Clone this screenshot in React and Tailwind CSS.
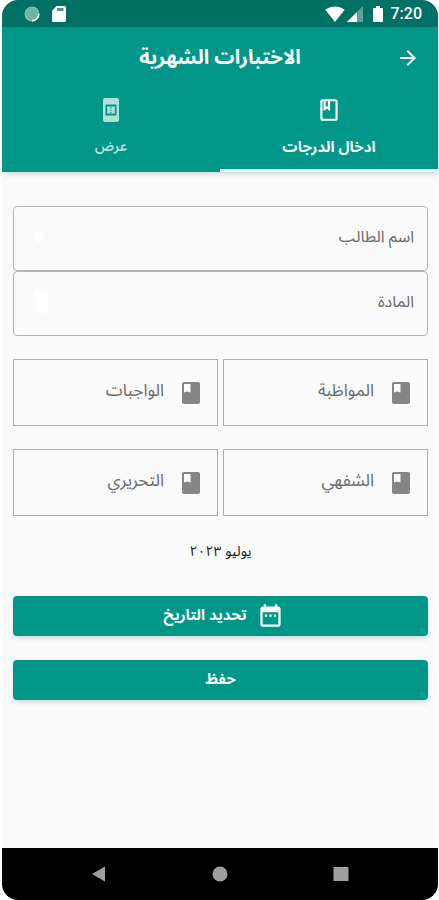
import React from "react";
import {
  MdArrowForward,
  MdDateRange,
  MdOutlineBook,
  MdSignalWifi4Bar,
} from "react-icons/md";

function StatusBar() {
  return (
    <div dir="ltr" className="flex h-[27px] items-center bg-[#007064] pl-5 pr-4 text-white">
      <svg className="ml-0.5 size-4" viewBox="0 0 16 16" aria-hidden="true">
        <circle cx="8" cy="8" r="7.5" fill="#8fc0b9" />
        <circle cx="8" cy="8" r="6.5" fill="#73b1a9" />
        <path d="M14.8 8A6.8 6.8 0 0 1 8 14.8" fill="none" stroke="#fff" strokeWidth="1.5" />
      </svg>
      <svg className="ml-3 h-4 w-3.5" viewBox="0 0 14 16" aria-hidden="true">
        <path d="M4.5 0H12.5Q14 0 14 1.5V14.5Q14 16 12.5 16H1.5Q0 16 0 14.5V5Z" fill="#fff" />
        <path d="M5 2H11.5V5H5Z" fill="#4a978e" />
      </svg>
      <div className="ml-auto flex items-center">
        <MdSignalWifi4Bar className="size-5" aria-hidden="true" />
        <svg className="ml-0.5 size-4" viewBox="0 0 16 16" aria-hidden="true">
          <path d="M0 16L16 0V16Z" fill="#5fa19a" />
          <path d="M0 16L10 6V16Z" fill="#fff" />
        </svg>
        <svg className="ml-2.5 h-4 w-2.5" viewBox="0 0 10 16" aria-hidden="true">
          <path d="M3 0H7V2H9Q10 2 10 3V15Q10 16 9 16H1Q0 16 0 15V3Q0 2 1 2H3Z" fill="#fff" />
        </svg>
        <span className="ml-2 font-['Roboto',sans-serif] text-base font-medium">7:20</span>
      </div>
    </div>
  );
}

function Dropdown({ id, label, children }) {
  return (
    <div className="relative">
      <select
        id={id}
        aria-label={label}
        className="block h-[65px] w-full appearance-none rounded border border-[#b5b5b5] bg-transparent px-[13px] pb-1 text-base leading-8 text-[#6b6b6b]"
      >
        <option>{label}</option>
      </select>
      {children}
    </div>
  );
}

function GradeField({ id, label }) {
  return (
    <div className="flex h-[67px] min-w-0 items-center gap-[18px] border border-[#adadad] px-[17px]">
      <svg className="h-[22px] w-[18px] shrink-0" viewBox="0 0 18 22" aria-hidden="true">
        <rect width="18" height="22" rx="2" fill="#858585" />
        <path d="M2 2H8.5V10.5L5.25 9.5L2 10.5Z" fill="#fafafa" />
      </svg>
      <input
        id={id}
        aria-label={label}
        placeholder={label}
        className="h-14 w-full min-w-0 bg-transparent pb-1 text-[17px] text-[#333] outline-none placeholder:text-[#6b6b6b]"
      />
    </div>
  );
}

export default function App() {
  return (
    <div className="min-h-screen bg-white pl-0.5 pr-px">
      <div
        dir="rtl"
        lang="ar"
        className="flex min-h-screen flex-col overflow-hidden rounded-2xl bg-[#fafafa] font-['Noto_Sans_Arabic','DejaVu_Sans',sans-serif]"
      >
        <StatusBar />
        <header className="bg-[#009688] text-white shadow-md">
          <div className="grid h-[57px] grid-cols-[1fr_auto_1fr] items-center px-[18px] pt-1">
            <button type="button" aria-label="رجوع" className="justify-self-start">
              <MdArrowForward className="size-6" />
            </button>
            <h1 className="text-xl font-bold">الاختبارات الشهرية</h1>
          </div>
          <div role="tablist" className="grid h-[88px] grid-cols-2">
            <button
              type="button"
              role="tab"
              aria-selected="true"
              className="flex flex-col items-center gap-3 border-b-[3px] border-[#eef5f4] pt-[13px] text-[15px] leading-6 font-bold"
            >
              <MdOutlineBook className="size-[26px]" />
              ادخال الدرجات
            </button>
            <button
              type="button"
              role="tab"
              aria-selected="false"
              className="flex flex-col items-center gap-3 pt-[13px] text-sm leading-6 font-semibold text-[#b3dfdb]"
            >
              <svg className="size-[26px]" viewBox="0 0 26 26" aria-hidden="true">
                <rect x="5" y="1" width="16" height="24" rx="2" fill="#b3dfdb" />
                <path d="M7.5 7.5H18.5V18.5H7.5Z" fill="#009688" />
                <path d="M9 9.5H17V11.5Q16 13 17 14.5V16.5H9V14.5Q10 13 9 11.5Z" fill="#b3dfdb" />
                <path d="M13 10V16" stroke="#009688" strokeDasharray="1.5 1" />
              </svg>
              عرض
            </button>
          </div>
        </header>

        <main className="flex-1 pr-2.5 pl-[11px] pt-[34px]">
          <Dropdown id="student" label="اسم الطالب">
            <svg className="pointer-events-none absolute left-5 top-6 size-3.5" viewBox="0 0 14 14" aria-hidden="true">
              <circle cx="6" cy="7" r="5" fill="#fff" />
            </svg>
          </Dropdown>
          <Dropdown id="subject" label="المادة">
            <svg className="pointer-events-none absolute left-5 top-5 h-6 w-4" viewBox="0 0 16 24" aria-hidden="true">
              <rect width="15" height="22" rx="4" fill="#fff" />
            </svg>
          </Dropdown>
          <div className="mt-[23px] grid grid-cols-2 gap-x-[5px] gap-y-[23px]">
            <GradeField id="attendance" label="المواظبة" />
            <GradeField id="homework" label="الواجبات" />
            <GradeField id="oral" label="الشفهي" />
            <GradeField id="written" label="التحريري" />
          </div>
          <p className="mt-6 text-center text-sm leading-6 text-[#222]">يوليو ٢٠٢٣</p>
          <button
            type="button"
            className="mt-8 flex h-10 w-full items-center justify-center gap-2.5 rounded-sm bg-[#009688] pb-0.5 pl-1.5 text-[15px] font-bold text-white shadow-md"
          >
            <MdDateRange className="size-[27px]" />
            تحديد التاريخ
          </button>
          <button
            type="button"
            className="mt-6 block h-10 w-full rounded-sm bg-[#009688] pb-0.5 text-[15px] font-bold text-white shadow-md"
          >
            حفظ
          </button>
        </main>

        <nav dir="ltr" className="flex h-[52px] items-center justify-center gap-[105px] bg-black">
          <button type="button" aria-label="Back">
            <svg className="size-4" viewBox="0 0 16 16"><path d="M1 8L14 0.5V15.5Z" fill="#9e9e9e" /></svg>
          </button>
          <button type="button" aria-label="Home">
            <svg className="size-4" viewBox="0 0 16 16"><circle cx="8" cy="8" r="7.5" fill="#9e9e9e" /></svg>
          </button>
          <button type="button" aria-label="Recents">
            <svg className="size-4" viewBox="0 0 16 16"><rect x="0.5" y="1" width="15" height="14" fill="#9e9e9e" /></svg>
          </button>
        </nav>
      </div>
    </div>
  );
}
